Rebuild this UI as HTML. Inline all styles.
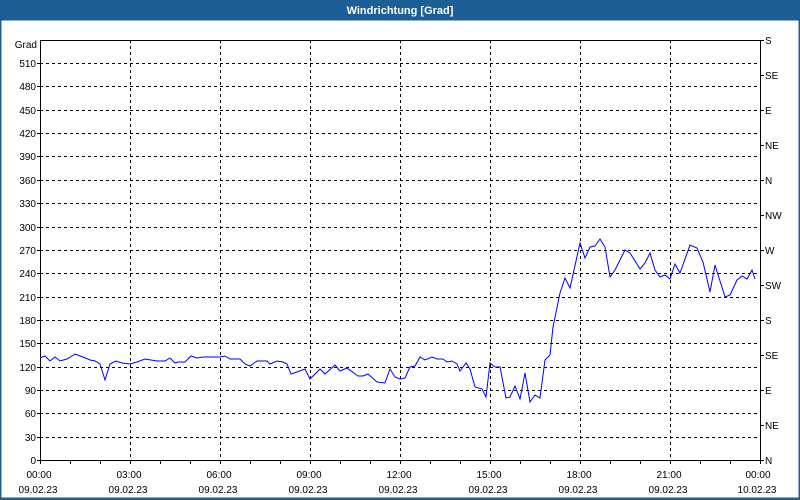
<!DOCTYPE html>
<html><head><meta charset="utf-8"><style>
html,body{margin:0;padding:0;width:800px;height:500px;overflow:hidden;background:#fff}
svg{display:block;font-family:"Liberation Sans",sans-serif}
</style></head><body>
<svg width="800" height="500" viewBox="0 0 800 500" xmlns="http://www.w3.org/2000/svg">
<rect x="0" y="0" width="800" height="500" fill="#1c5f97"/>
<rect x="1.5" y="20.5" width="797" height="477" fill="#fff"/>
<text x="400" y="14" fill="#fff" font-size="11" font-weight="bold" text-anchor="middle">Windrichtung [Grad]</text>
<g stroke="#000" stroke-width="1" stroke-dasharray="3,3" shape-rendering="crispEdges">
<path d="M40 63.5H760M40 86.5H760M40 110.5H760M40 133.5H760M40 156.5H760M40 180.5H760M40 203.5H760M40 227.5H760M40 250.5H760M40 273.5H760M40 297.5H760M40 320.5H760M40 343.5H760M40 367.5H760M40 390.5H760M40 413.5H760M40 437.5H760"/>
<path d="M130.5 40V460M220.5 40V460M310.5 40V460M400.5 40V460M490.5 40V460M580.5 40V460M670.5 40V460"/>
</g>
<g stroke="#000" stroke-width="1" fill="none" shape-rendering="crispEdges">
<rect x="40.5" y="40.5" width="720" height="420"/>
<path d="M37 63.5H40M37 86.5H40M37 110.5H40M37 133.5H40M37 156.5H40M37 180.5H40M37 203.5H40M37 227.5H40M37 250.5H40M37 273.5H40M37 297.5H40M37 320.5H40M37 343.5H40M37 367.5H40M37 390.5H40M37 413.5H40M37 437.5H40M37 460.5H40"/>
<path d="M760 40.5H764M760 75.5H764M760 110.5H764M760 145.5H764M760 180.5H764M760 215.5H764M760 250.5H764M760 285.5H764M760 320.5H764M760 355.5H764M760 390.5H764M760 425.5H764M760 460.5H764"/>
<path d="M40.5 460V464M70.5 460V464M100.5 460V464M130.5 460V464M160.5 460V464M190.5 460V464M220.5 460V464M250.5 460V464M280.5 460V464M310.5 460V464M340.5 460V464M370.5 460V464M400.5 460V464M430.5 460V464M460.5 460V464M490.5 460V464M520.5 460V464M550.5 460V464M580.5 460V464M610.5 460V464M640.5 460V464M670.5 460V464M700.5 460V464M730.5 460V464M760.5 460V464"/>
</g>
<g font-size="10" fill="#000" text-anchor="end">
<text x="37" y="48">Grad</text>
<text x="36" y="67">510</text><text x="36" y="90">480</text><text x="36" y="114">450</text><text x="36" y="137">420</text><text x="36" y="160">390</text><text x="36" y="184">360</text><text x="36" y="207">330</text><text x="36" y="231">300</text><text x="36" y="254">270</text><text x="36" y="277">240</text><text x="36" y="301">210</text><text x="36" y="324">180</text><text x="36" y="347">150</text><text x="36" y="371">120</text><text x="36" y="394">90</text><text x="36" y="417">60</text><text x="36" y="441">30</text><text x="36" y="464">0</text>
</g>
<g font-size="10" fill="#000">
<text x="765" y="44">S</text><text x="765" y="79">SE</text><text x="765" y="114">E</text><text x="765" y="149">NE</text><text x="765" y="184">N</text><text x="765" y="219">NW</text><text x="765" y="254">W</text><text x="765" y="289">SW</text><text x="765" y="324">S</text><text x="765" y="359">SE</text><text x="765" y="394">E</text><text x="765" y="429">NE</text><text x="765" y="464">N</text>
</g>
<g font-size="10" fill="#000" text-anchor="middle">
<text x="39" y="478">00:00</text><text x="129" y="478">03:00</text><text x="219" y="478">06:00</text><text x="309" y="478">09:00</text><text x="399" y="478">12:00</text><text x="489" y="478">15:00</text><text x="579" y="478">18:00</text><text x="669" y="478">21:00</text><text x="758" y="478">00:00</text>
<text x="38" y="493">09.02.23</text><text x="128" y="493">09.02.23</text><text x="218" y="493">09.02.23</text><text x="308" y="493">09.02.23</text><text x="398" y="493">09.02.23</text><text x="488" y="493">09.02.23</text><text x="578" y="493">09.02.23</text><text x="668" y="493">09.02.23</text><text x="757" y="493">10.02.23</text>
</g>
<polyline fill="none" stroke="#0000ff" stroke-width="1" points="40,358 45,356 50,361 55,357 60,361 67,359 75,354 83,357 90,360 95,361 100,364 105,380 110,364 116,361 122,363 130,364 137,362 145,359 157,361 165,361 170,358 175,363 178,362 185,362 191,356 197,358 203,357 213,357 220,357 225,356 230,359 240,359 245,364 250,366 257,361 267,361 270,364 277,361 283,362 287,364 291,374 297,372 305,369 310,379 320,369 325,374 335,365 340,371 347,368 358,376 363,376 368,374 377,382 385,383 390,369 395,377 400,379 405,378 410,367 415,366 420,357 425,360 432,357 437,359 443,359 447,362 452,361 457,364 460,371 466,363 470,369 475,387 482,389 486,397 490,363 495,367 500,367 506,398 510,397 515,386 520,399 525,373 530,402 535,395 540,398 545,360 550,355 553,327 560,293 565,278 570,288 580,243 585,258 590,247 595,246 600,239 605,247 610,277 615,270 625,250 630,253 640,269 645,263 650,253 655,270 660,277 665,275 670,279 675,264 680,273 690,245 697,248 703,262 710,292 715,265 725,297 730,295 737,280 742,276 747,279 752,270 755,279"/>
</svg>
</body></html>
